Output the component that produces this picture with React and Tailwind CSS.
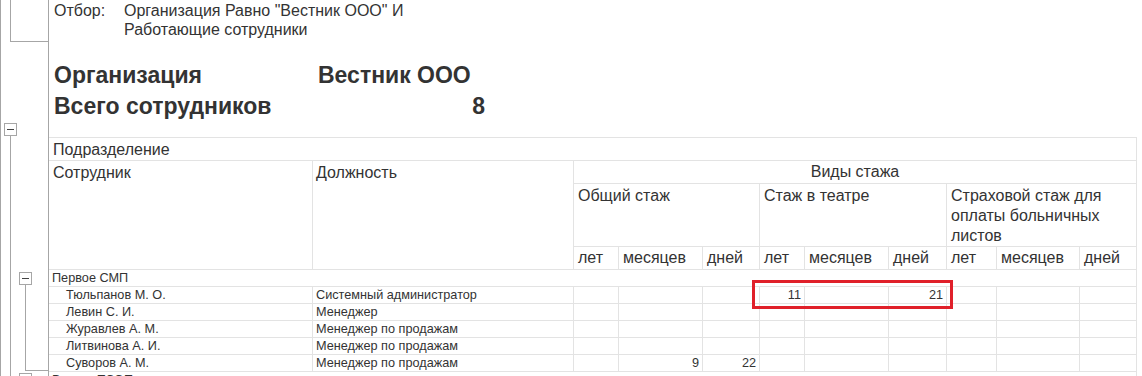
import React from "react";

const FONT = { fontFamily: '"Liberation Sans", Arial, sans-serif' };

// Column widths, each including its right border line
const GRID =
  "grid grid-cols-[264px_261px_45px_84px_57px_45px_84px_58px_50px_83px_57px]";

const LINE = "border-[#e3e3e3]";
const ROWTXT = "text-[12.7px] leading-[16px]";

const employees = [
  { name: "Тюльпанов М. О.", pos: "Системный администратор", v: ["", "", "", "11", "", "21", "", "", ""] },
  { name: "Левин С. И.", pos: "Менеджер", v: ["", "", "", "", "", "", "", "", ""] },
  { name: "Журавлев А. М.", pos: "Менеджер по продажам", v: ["", "", "", "", "", "", "", "", ""] },
  { name: "Литвинова А. И.", pos: "Менеджер по продажам", v: ["", "", "", "", "", "", "", "", ""] },
  { name: "Суворов А. М.", pos: "Менеджер по продажам", v: ["", "9", "22", "", "", "", "", "", ""] },
];

function TreeGutter() {
  const c = "#a6a6a6";
  return (
    <svg width="49" height="376" className="shrink-0 block" shapeRendering="crispEdges">
      <line x1="0.5" y1="0" x2="0.5" y2="376" stroke={c} />
      <line x1="10.5" y1="0" x2="10.5" y2="41" stroke={c} />
      <line x1="10" y1="41.5" x2="49" y2="41.5" stroke={c} />
      <line x1="48.5" y1="0" x2="48.5" y2="376" stroke={c} />
      {/* outer group toggle */}
      <rect x="4.5" y="123.5" width="12" height="12" fill="#fff" stroke={c} />
      <line x1="7" y1="129.5" x2="14" y2="129.5" stroke="#444" />
      <line x1="10.5" y1="136" x2="10.5" y2="376" stroke={c} />
      {/* first department toggle */}
      <rect x="19.5" y="272.5" width="12" height="12" fill="#fff" stroke={c} />
      <line x1="22" y1="278.5" x2="29" y2="278.5" stroke="#444" />
      <line x1="25.5" y1="285" x2="25.5" y2="370" stroke={c} />
      <line x1="25" y1="370.5" x2="49" y2="370.5" stroke={c} />
      {/* second department toggle */}
      <rect x="19.5" y="373.5" width="12" height="12" fill="#fff" stroke={c} />
    </svg>
  );
}

function HeadCell({ className = "", children }) {
  return (
    <div className={`border-r border-b ${LINE} text-[16px] leading-[20px] ${className}`}>
      {children}
    </div>
  );
}

export default function App() {
  return (
    <div className="w-[1142px] h-[376px] overflow-hidden bg-white text-[#333] flex" style={FONT}>
      <TreeGutter />
      <div className="flex flex-col w-[1088px] shrink-0">
        {/* report parameters */}
        <div className="h-[137px] shrink-0 pl-[5px] pt-[1px]">
          <div className="flex text-[16px] leading-[19px]">
            <div className="w-[70px]">Отбор:</div>
            <div>
              Организация Равно "Вестник ООО" И
              <br />
              Работающие сотрудники
            </div>
          </div>
          <div className="mt-[21px] grid grid-cols-[264px_167px] text-[23px] leading-[31px] font-bold">
            <div>Организация</div>
            <div>Вестник ООО</div>
            <div>Всего сотрудников</div>
            <div className="text-right">8</div>
          </div>
        </div>

        {/* report table */}
        <div className={`relative shrink-0 border-t ${LINE}`}>
          <div className={GRID}>
            <HeadCell className="col-span-11 h-[23px] pl-[4px] pt-[2px]">Подразделение</HeadCell>

            <HeadCell className="row-span-3 pl-[4px] pt-[2px]">Сотрудник</HeadCell>
            <HeadCell className="row-span-3 pl-[3px] pt-[2px]">Должность</HeadCell>
            <HeadCell className="col-span-9 h-[23px] text-center pt-[1px]">Виды стажа</HeadCell>

            <HeadCell className="col-span-3 h-[63px] pl-[4px] pt-[2px]">Общий стаж</HeadCell>
            <HeadCell className="col-span-3 h-[63px] pl-[4px] pt-[2px]">Стаж в театре</HeadCell>
            <HeadCell className="col-span-3 h-[63px] pl-[4px] pt-[2px]">
              Страховой стаж для
              <br />
              оплаты больничных
              <br />
              листов
            </HeadCell>

            {["лет", "месяцев", "дней", "лет", "месяцев", "дней", "лет", "месяцев", "дней"].map((t, i) => (
              <HeadCell key={i} className="h-[23px] pl-[4px] pt-[1px]">
                {t}
              </HeadCell>
            ))}

            <div className={`col-span-11 h-[17px] border-r border-b ${LINE} pl-[3px] ${ROWTXT}`}>
              Первое СМП
            </div>

            {employees.map((e) => (
              <React.Fragment key={e.name}>
                <div className={`h-[17px] border-r border-b ${LINE} pl-[17px] ${ROWTXT}`}>{e.name}</div>
                <div className={`h-[17px] border-r border-b ${LINE} pl-[3px] ${ROWTXT}`}>{e.pos}</div>
                {e.v.map((n, i) => (
                  <div key={i} className={`h-[17px] border-r border-b ${LINE} pr-[3px] text-right ${ROWTXT}`}>
                    {n}
                  </div>
                ))}
              </React.Fragment>
            ))}

            <div className={`col-span-11 h-[17px] border-r border-b ${LINE} pl-[3px] ${ROWTXT}`}>
              Второе ТСОП
            </div>
          </div>

          {/* highlight frame around the theatre service cells */}
          <div className="absolute left-[703px] top-[142px] w-[201px] h-[29px] border-[3px] border-[#e0202a] pointer-events-none" />
        </div>
      </div>
    </div>
  );
}
